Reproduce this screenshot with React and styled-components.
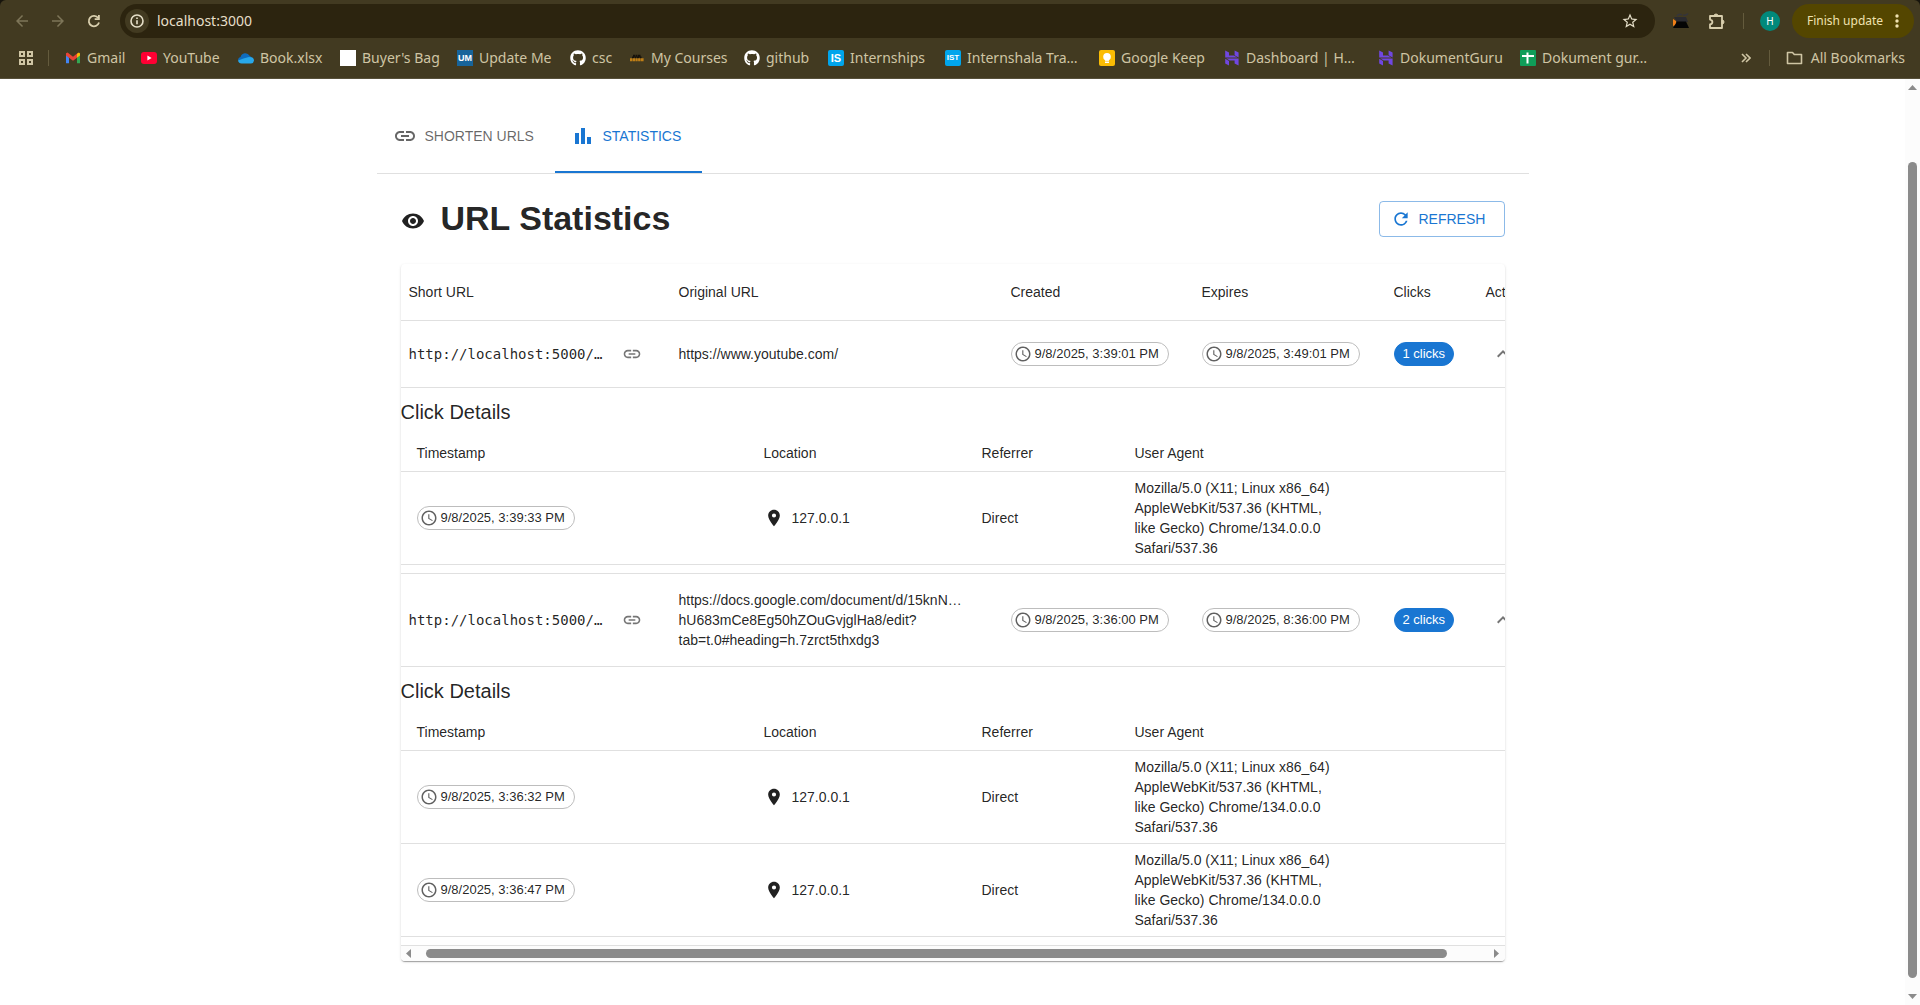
import React from 'react';
import styled, { createGlobalStyle } from 'styled-components';
import { FaGithub } from 'react-icons/fa';
import {
  MdLink, MdBarChart, MdVisibility, MdRefresh, MdAccessTime, MdLocationOn,
  MdExpandLess, MdArrowBack, MdArrowForward, MdStarBorder,
} from 'react-icons/md';

const sans = '"Liberation Sans", Arial, sans-serif';
const chromeFont = '"Noto Sans", "Open Sans", sans-serif';

const GlobalStyle = createGlobalStyle`
  * { box-sizing: border-box; }
  body { margin: 0; background: #fff; overflow: hidden; }
  button { font: inherit; color: inherit; background: none; border: 0; padding: 0; cursor: pointer; }
  svg { display: block; flex: none; }
`;

const Window = styled.div`
  height: 100vh;
  display: flex;
  flex-direction: column;
  background: #17140c;
  color: rgba(0, 0, 0, 0.87);
  font-family: ${sans};
  font-size: 14px;
  line-height: 20px;
`;

/* ---------- browser frame ---------- */
const Browser = styled.header`
  flex: none;
  padding: 4px 0 0;
  height: 79px;
  background: #423a21;
  color: #cfc5a4;
  font-family: ${chromeFont};
  border-bottom: 1px solid #57503a;
  border-radius: 6px 6px 0 0;
`;
const Toolbar = styled.div`
  display: flex;
  align-items: center;
  height: 34px;
  padding: 0 6px 0 4px;
`;
const ToolButton = styled.button`
  width: 36px;
  height: 34px;
  display: flex;
  align-items: center;
  justify-content: center;
  color: ${(p) => (p.$dim ? '#7d7558' : '#d9cfae')};
`;
const Address = styled.div`
  flex: 1;
  display: flex;
  align-items: center;
  gap: 8px;
  height: 34px;
  margin-left: 8px;
  padding: 0 16px 0 5px;
  border-radius: 17px;
  background: #2c240f;
`;
const SiteInfo = styled.button`
  width: 24px;
  height: 24px;
  flex: none;
  display: flex;
  align-items: center;
  justify-content: center;
  border-radius: 50%;
  background: #423a21;
`;
const AddressInput = styled.input`
  flex: 1;
  border: 0;
  outline: 0;
  padding: 0;
  background: none;
  color: #e6dfc9;
  font: 14px/20px ${chromeFont};
`;
const Extensions = styled.div`
  display: flex;
  align-items: center;
  margin-left: 8px;
`;
const Divider = styled.span`
  width: 1px;
  height: 16px;
  flex: none;
  background: #645b3d;
  margin: ${(p) => p.$margin};
`;
const Avatar = styled.button`
  width: 20px;
  height: 20px;
  margin-right: 12px;
  border-radius: 50%;
  background: #00897b;
  color: #fff;
  font-size: 10px;
  line-height: 20px;
`;
const UpdateButton = styled.button`
  display: flex;
  align-items: center;
  justify-content: space-between;
  width: 122px;
  height: 34px;
  padding: 0 15px;
  border-radius: 17px;
  background: #544600;
  color: #f0e2b0;
  font-size: 12px;
  white-space: nowrap;
`;
const Bookmarks = styled.nav`
  display: flex;
  align-items: center;
  height: 40px;
  padding: 0 15px 0 19px;
`;
const BookmarkList = styled.div`
  flex: 1;
  min-width: 0;
  display: flex;
  align-items: center;
`;
const Bookmark = styled.a`
  display: flex;
  align-items: center;
  gap: ${(p) => p.$gap || 6}px;
  width: ${(p) => (p.$width ? `${p.$width}px` : 'auto')};
  flex: none;
  color: inherit;
  font-size: 14px;
  line-height: 20px;
  text-decoration: none;
  white-space: nowrap;
`;
const Badge = styled.span`
  width: 16px;
  height: 16px;
  flex: none;
  border-radius: ${(p) => p.$radius || 0}px;
  background: ${(p) => p.$bg};
  color: #fff;
  font: bold ${(p) => p.$size || 10}px/16px ${sans};
  text-align: center;
`;

/* ---------- scrollable page ---------- */
const Viewport = styled.div`
  flex: 1;
  min-height: 0;
  display: flex;
  background: #fff;
`;
const Page = styled.main`
  flex: 1;
  min-width: 0;
  padding: 22px 24px 0;
  overflow: hidden;
`;
const Container = styled.div`
  max-width: 1152px;
  margin: 0 auto;
`;
const Track = styled.div`
  flex: none;
  display: flex;
  flex-direction: ${(p) => (p.$vertical ? 'column' : 'row')};
  align-items: center;
  justify-content: space-between;
  ${(p) => (p.$vertical ? 'width: 15px; padding: 6px 0;' : 'height: 15px; padding: 0 6px 0 5px;')}
  background: #fcfcfc;
  color: #8b8b8b;
`;
const Rail = styled.div`
  flex: 1;
  display: flex;
  ${(p) => (p.$vertical ? 'flex-direction: column; padding: 72px 0 16px;' : 'padding: 0 47px 0 15px;')}
`;
const Thumb = styled.div`
  flex: 1;
  min-width: 9px;
  min-height: 9px;
  border-radius: 5px;
  background: #8b8b8b;
`;
const Tabs = styled.div`
  display: flex;
  border-bottom: 1px solid #e0e0e0;
`;
const Tab = styled.button`
  display: flex;
  align-items: center;
  gap: 8px;
  width: ${(p) => p.$width}px;
  height: 72px;
  padding: 0 16px 2px;
  color: ${(p) => (p.$active ? '#1976d2' : 'rgba(0,0,0,0.6)')};
  box-shadow: ${(p) => (p.$active ? 'inset 0 -2px #1976d2' : 'none')};
  text-transform: uppercase;
  white-space: nowrap;
`;
const Panel = styled.section`
  padding: 24px;
`;
const PanelHead = styled.div`
  display: flex;
  align-items: center;
  justify-content: space-between;
  margin-bottom: 24px;
`;
const Title = styled.h1`
  margin: 0;
  padding-bottom: 2px;
  font-size: 34px;
  line-height: 40px;
  font-weight: 700;
  svg { display: inline-block; vertical-align: middle; margin-right: 16px; }
`;
const RefreshButton = styled.button`
  display: flex;
  align-items: center;
  gap: 8px;
  min-width: 126px;
  height: 36px;
  padding: 0 15px 0 11px;
  border: 1px solid rgba(25, 118, 210, 0.5);
  border-radius: 4px;
  color: #1976d2;
  text-transform: uppercase;
`;
const Paper = styled.div`
  overflow: hidden;
  border-radius: 4px;
  background: #fff;
  box-shadow: 0 2px 1px -1px rgba(0,0,0,.2), 0 1px 1px rgba(0,0,0,.14), 0 1px 3px rgba(0,0,0,.12);
`;
const Clip = styled.div`
  overflow: hidden;
`;
const Table = styled.table`
  width: ${(p) => p.$width || '100%'};
  table-layout: fixed;
  border-collapse: separate;
  border-spacing: 0;
`;
const Th = styled.th`
  padding: ${(p) => (p.$dense ? '6px 16px' : '16px 8px')};
  border-bottom: 1px solid #e0e0e0;
  font-weight: 400;
  line-height: 24px;
  text-align: left;
`;
const Td = styled.td`
  padding: ${(p) => (p.$dense ? '6px 16px' : '16px 8px')};
  border-bottom: 1px solid #e0e0e0;
  vertical-align: middle;
`;
const DetailCell = styled.td`
  padding: 8px 0;
  border-bottom: 1px solid #e0e0e0;
`;
const DetailTitle = styled.h2`
  margin: 0 0 7px;
  font-size: 20px;
  line-height: 32px;
  font-weight: 400;
`;
const Inline = styled.div`
  display: flex;
  align-items: center;
  gap: 8px;
`;
const ShortUrl = styled.span`
  width: 200px;
  font-family: "DejaVu Sans Mono", monospace;
  white-space: nowrap;
`;
const IconButton = styled.button`
  display: flex;
  padding: 5px;
  color: rgba(0, 0, 0, 0.54);
`;
const Agent = styled.div`
  width: 200px;
`;
const Chip = styled.span`
  display: inline-flex;
  align-items: center;
  height: 24px;
  vertical-align: middle;
  padding: 0 ${(p) => (p.$filled ? 8 : 9)}px 0 ${(p) => (p.$filled ? 8 : 2)}px;
  gap: 3px;
  border: 1px solid ${(p) => (p.$filled ? '#1976d2' : '#bdbdbd')};
  border-radius: 12px;
  background: ${(p) => (p.$filled ? '#1976d2' : 'transparent')};
  color: ${(p) => (p.$filled ? '#fff' : 'inherit')};
  font-size: 13px;
  white-space: nowrap;
  svg { color: #616161; }
`;

const TimeChip = ({ children }) => (
  <Chip><MdAccessTime size={18} />{children}</Chip>
);

const Arrow = ({ points, w, h }) => (
  <svg width={w} height={h} viewBox={`0 0 ${w} ${h}`} fill="currentColor"><polygon points={points} /></svg>
);

const AppsIcon = () => (
  <svg width="14" height="14" viewBox="0 0 14 14" fill="none" stroke="currentColor" strokeWidth="2">
    <path d="M1 1h4v4H1zM9 1h4v4H9zM1 9h4v4H1zM9 9h4v4H9z" />
  </svg>
);
const ReloadIcon = () => (
  <svg width="16" height="16" viewBox="0 0 16 16" fill="none" stroke="currentColor" strokeWidth="1.8">
    <path d="M13 9.600A5.200 5.200 0 1 1 12.200 5" /><path d="M12.900 2V6.200H8.700" />
  </svg>
);
const InfoIcon = () => (
  <svg width="16" height="16" viewBox="0 0 16 16" fill="none" stroke="#e6dfc9" strokeWidth="1.6">
    <circle cx="8" cy="8" r="6" /><path d="M8 7.2v4M8 4.4v1.6" />
  </svg>
);
const PuzzleIcon = () => (
  <svg width="18" height="18" viewBox="0 0 18 18">
    <path d="M2 4h12v12H2v-3.600q2.400-.4 2.400-2.400T2 7.600z" fill="none" stroke="currentColor" strokeWidth="1.800" strokeLinejoin="round" />
    <path d="M6 4a2 2 0 0 1 4 0zM14 8a2 2 0 0 1 0 4z" fill="currentColor" stroke="currentColor" />
  </svg>
);
const DotsIcon = () => (
  <svg width="4" height="14" viewBox="0 0 4 14" fill="currentColor">
    <circle cx="2" cy="2" r="1.700" /><circle cx="2" cy="7" r="1.700" /><circle cx="2" cy="12" r="1.700" />
  </svg>
);
const FolderIcon = () => (
  <svg width="17" height="14" viewBox="0 0 17 14" fill="none" stroke="currentColor" strokeWidth="1.600" strokeLinejoin="round">
    <path d="M1.500 1.500h5l1.800 2h7.200v9h-14z" />
  </svg>
);
const GmailIcon = () => (
  <svg width="16" height="16" viewBox="0 0 16 16">
    <path d="M1 4v9.2h3V7.4z" fill="#4285f4" />
    <path d="M15 4v9.2h-3V7.4z" fill="#34a853" />
    <path d="M1 3.2 2.6 2.6 8 6.8l5.4-4.2L12 7.8l-4 3-4-3-3-2.2z" fill="#ea4335" />
    <path d="M12 4 13.4 2.8Q15 2.4 15 4v1.6l-3 2.2z" fill="#fbbc04" />
  </svg>
);
const YoutubeIcon = () => (
  <svg width="16" height="16" viewBox="0 0 16 16">
    <rect y="2" width="16" height="12" rx="3" fill="#ff0033" /><path d="M6.4 5.6v4.8L10.6 8z" fill="#fff" />
  </svg>
);
const CloudIcon = () => (
  <svg width="16" height="16" viewBox="0 0 16 16">
    <path d="M2.600 7a4.800 4.800 0 0 1 9-1.200L14.500 8 9 12 0 10.500Q0 7.600 2.600 7z" fill="#0f6cbd" />
    <path d="M0 10.500 5.500 8.600 11 7q5 0 5 3.400Q15.800 13 13 13.400H3.500Q.6 13.400 0 10.500z" fill="#28a8ea" />
  </svg>
);
const CoursesIcon = () => (
  <svg width="16" height="16" viewBox="0 0 16 16">
    <path d="M4 5.800h8M3 7.400h10" stroke="#15110a" strokeWidth="2" strokeDasharray="2 .5" />
    <path d="M1 9.800h14" stroke="#c07f16" strokeWidth="3" strokeDasharray="2.300 .4" />
  </svg>
);
const KeepIcon = () => (
  <svg width="16" height="16" viewBox="0 0 16 16">
    <rect width="16" height="16" rx="2" fill="#fbbc04" /><circle cx="8" cy="6.800" r="3.800" fill="#fff" />
    <path d="M6 9h4v1.800H6zM6 11.600h4V13H6z" fill="#fff" />
  </svg>
);
const HostIcon = () => (
  <svg width="16" height="16" viewBox="0 0 16 16" fill="#7047e0">
    <path d="M1.200.5 5 2.600V5.600H9.800L13.400 7.600H1.200zM10.600.5 14.600 2.600V7.400L10.600 5.200zM2.200 8.600H14.600V15.500L10.600 13.400V10.600H5.800zM1.200 8.800 5 10.900V15.500L1.200 13.400z" />
  </svg>
);
const SheetIcon = () => (
  <svg width="16" height="16" viewBox="0 0 16 16">
    <rect width="16" height="16" rx="1" fill="#0f9d58" /><path d="M6.500 2.500h2V5H14v2H8.500v6.500h-2V7H2V5h4.500z" fill="#fff" />
  </svg>
);
const ExtensionArt = () => (
  <svg width="18" height="18" viewBox="0 0 18 18">
    <path d="M1 7l3 2v4l-3 1z" fill="#f08019" />
    <path d="M2 5h12l2 5H5z" fill="#2b2b30" /><path d="M5 9.500h9l3 6.500H1z" fill="#050505" />
    <path d="M5 4q2-3 5-1M11 3q3 1 5-1.500" stroke="#35353b" strokeWidth="1.500" fill="none" />
  </svg>
);

const bookmarks = [
  ['Gmail', 76, <GmailIcon />],
  ['YouTube', 97, <YoutubeIcon />],
  ['Book.xlsx', 102, <CloudIcon />],
  ["Buyer's Bag", 117, <Badge $bg="#fff" />],
  ['Update Me', 113, <Badge $bg="#17649b" $size={9}>UM</Badge>],
  ['csc', 59, <FaGithub size={16} color="#fff" />],
  ['My Courses', 115, <CoursesIcon />],
  ['github', 84, <FaGithub size={16} color="#fff" />],
  ['Internships', 117, <Badge $bg="#00a5ec" $radius={2} $size={11}>IS</Badge>],
  ['Internshala Tra…', 154, <Badge $bg="#00a5ec" $radius={2} $size={8}>IST</Badge>],
  ['Google Keep', 125, <KeepIcon />],
  ['Dashboard | H…', 154, <HostIcon />],
  ['DokumentGuru', 142, <HostIcon />],
  ['Dokument gur…', 150, <SheetIcon />],
];

const agent = 'Mozilla/5.0 (X11; Linux x86_64) AppleWebKit/537.36 (KHTML, like Gecko) Chrome/134.0.0.0 Safari/537.36';

const links = [
  {
    original: 'https://www.youtube.com/',
    created: '9/8/2025, 3:39:01 PM',
    expires: '9/8/2025, 3:49:01 PM',
    clicks: ['9/8/2025, 3:39:33 PM'],
  },
  {
    original: <>https://docs.google.com/document/d/15knN…<br />hU683mCe8Eg50hZOuGvjglHa8/edit?<br />tab=t.0#heading=h.7zrct5thxdg3</>,
    created: '9/8/2025, 3:36:00 PM',
    expires: '9/8/2025, 8:36:00 PM',
    clicks: ['9/8/2025, 3:36:32 PM', '9/8/2025, 3:36:47 PM'],
  },
];

function ClickDetails({ clicks }) {
  return (
    <>
      <DetailTitle>Click Details</DetailTitle>
      <Table>
        <colgroup><col width="347" /><col width="218" /><col width="153" /><col /></colgroup>
        <thead>
          <tr><Th $dense>Timestamp</Th><Th $dense>Location</Th><Th $dense>Referrer</Th><Th $dense>User Agent</Th></tr>
        </thead>
        <tbody>
          {clicks.map((time) => (
            <tr key={time}>
              <Td $dense><TimeChip>{time}</TimeChip></Td>
              <Td $dense><Inline><MdLocationOn size={20} />127.0.0.1</Inline></Td>
              <Td $dense>Direct</Td>
              <Td $dense><Agent>{agent}</Agent></Td>
            </tr>
          ))}
        </tbody>
      </Table>
    </>
  );
}

export default function App() {
  return (
    <Window>
      <GlobalStyle />
      <Browser>
        <Toolbar>
          <ToolButton $dim aria-label="Back"><MdArrowBack size={18} /></ToolButton>
          <ToolButton $dim aria-label="Forward"><MdArrowForward size={18} /></ToolButton>
          <ToolButton aria-label="Reload"><ReloadIcon /></ToolButton>
          <Address>
            <SiteInfo aria-label="Site information"><InfoIcon /></SiteInfo>
            <AddressInput aria-label="Address" defaultValue="localhost:3000" />
            <MdStarBorder size={18} color="#e6dfc9" />
          </Address>
          <Extensions>
            <ToolButton aria-label="Extension"><ExtensionArt /></ToolButton>
            <ToolButton aria-label="Extensions"><PuzzleIcon /></ToolButton>
            <Divider $margin="0 16px 0 8px" />
            <Avatar>H</Avatar>
            <UpdateButton>Finish update<DotsIcon /></UpdateButton>
          </Extensions>
        </Toolbar>
        <Bookmarks>
          <AppsIcon />
          <Divider $margin="0 16px 0 15px" />
          <BookmarkList>
            {bookmarks.map(([label, width, icon]) => (
              <Bookmark key={label} href="#" $width={width}>{icon}{label}</Bookmark>
            ))}
          </BookmarkList>
          <svg width="10" height="10" viewBox="0 0 10 10" fill="none" stroke="currentColor" strokeWidth="1.6"><path d="M1 1l4 4-4 4M5 1l4 4-4 4" /></svg>
          <Divider $margin="0 16px 0 18px" />
          <Bookmark as="button" $gap={8}><FolderIcon />All Bookmarks</Bookmark>
        </Bookmarks>
      </Browser>
      <Viewport>
        <Page>
          <Container>
            <Tabs role="tablist">
              <Tab role="tab" $width={178}><MdLink size={24} />Shorten URLs</Tab>
              <Tab role="tab" aria-selected="true" $active $width={147}><MdBarChart size={24} />Statistics</Tab>
            </Tabs>
            <Panel>
              <PanelHead>
                <Title><MdVisibility size={24} />URL Statistics</Title>
                <RefreshButton><MdRefresh size={20} />Refresh</RefreshButton>
              </PanelHead>
              <Paper>
                <Clip>
                  <Table $width="1156px">
                    <colgroup>
                      <col width="270" /><col width="332" /><col width="191" /><col width="192" /><col width="92" /><col />
                    </colgroup>
                    <thead>
                      <tr><Th>Short URL</Th><Th>Original URL</Th><Th>Created</Th><Th>Expires</Th><Th>Clicks</Th><Th>Actions</Th></tr>
                    </thead>
                    <tbody>
                      {links.map((link) => (
                        <React.Fragment key={link.created}>
                          <tr>
                            <Td>
                              <Inline>
                                <ShortUrl>http://localhost:5000/…</ShortUrl>
                                <IconButton aria-label="Copy link"><MdLink size={20} /></IconButton>
                              </Inline>
                            </Td>
                            <Td>{link.original}</Td>
                            <Td><TimeChip>{link.created}</TimeChip></Td>
                            <Td><TimeChip>{link.expires}</TimeChip></Td>
                            <Td><Chip $filled>{link.clicks.length} clicks</Chip></Td>
                            <Td><IconButton aria-label="Collapse"><MdExpandLess size={24} /></IconButton></Td>
                          </tr>
                          <tr><DetailCell colSpan={6}><ClickDetails clicks={link.clicks} /></DetailCell></tr>
                        </React.Fragment>
                      ))}
                    </tbody>
                  </Table>
                </Clip>
                <Track>
                  <Arrow w={5} h={9} points="5,0 5,9 0,4.5" />
                  <Rail><Thumb /></Rail>
                  <Arrow w={5} h={9} points="0,0 0,9 5,4.5" />
                </Track>
              </Paper>
            </Panel>
          </Container>
        </Page>
        <Track $vertical>
          <Arrow w={9} h={5} points="0,5 9,5 4.5,0" />
          <Rail $vertical><Thumb /></Rail>
          <Arrow w={9} h={5} points="0,0 9,0 4.5,5" />
        </Track>
      </Viewport>
    </Window>
  );
}
